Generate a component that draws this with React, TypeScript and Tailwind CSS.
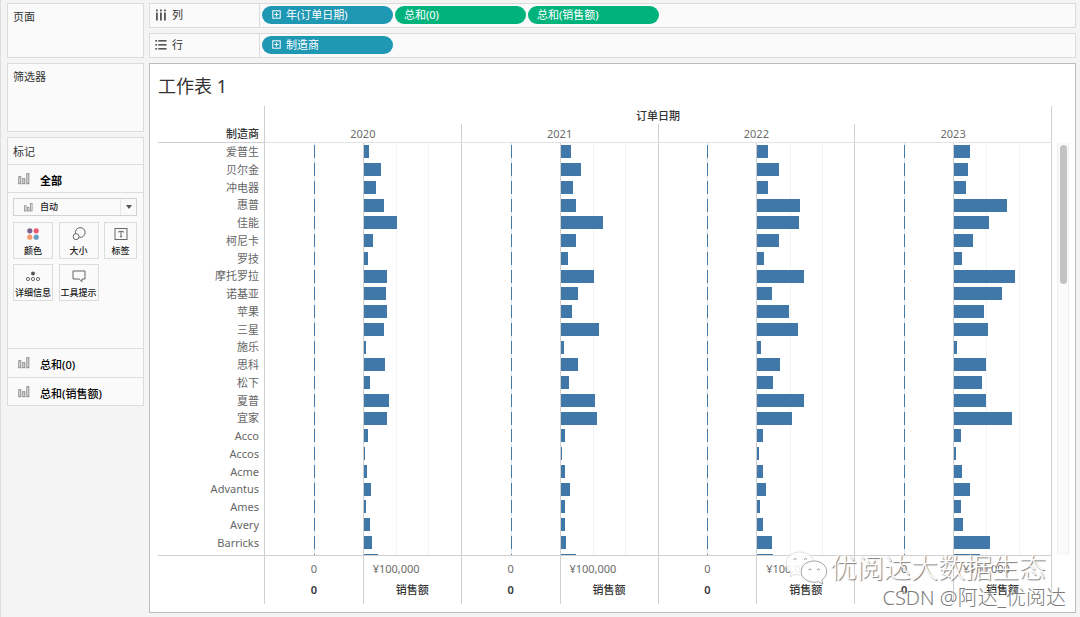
import type { ReactNode } from "react";
import clsx from "clsx";

const YEARS = ["2020", "2021", "2022", "2023"];

// upper end of the sales axis, in thousands of yuan
const AXIS_MAX = 295;

// sales per manufacturer in thousands of yuan, one value for each year
const ROWS: { name: string; sales: number[] }[] = [
  { name: "爱普生", sales: [15, 31, 33, 49] },
  { name: "贝尔金", sales: [52, 61, 65, 42] },
  { name: "冲电器", sales: [36, 37, 31, 36] },
  { name: "惠普", sales: [60, 47, 129, 161] },
  { name: "佳能", sales: [102, 130, 126, 105] },
  { name: "柯尼卡", sales: [28, 47, 65, 57] },
  { name: "罗技", sales: [13, 23, 20, 23] },
  { name: "摩托罗拉", sales: [69, 103, 143, 185] },
  { name: "诺基亚", sales: [66, 52, 44, 145] },
  { name: "苹果", sales: [70, 34, 95, 90] },
  { name: "三星", sales: [60, 116, 124, 102] },
  { name: "施乐", sales: [7, 10, 12, 10] },
  { name: "思科", sales: [63, 52, 68, 97] },
  { name: "松下", sales: [18, 26, 49, 84] },
  { name: "夏普", sales: [76, 106, 143, 97] },
  { name: "宜家", sales: [71, 110, 105, 175] },
  { name: "Acco", sales: [13, 13, 17, 20] },
  { name: "Accos", sales: [4, 4, 4, 6] },
  { name: "Acme", sales: [10, 13, 17, 23] },
  { name: "Advantus", sales: [23, 28, 25, 47] },
  { name: "Ames", sales: [7, 13, 9, 20] },
  { name: "Avery", sales: [19, 13, 17, 26] },
  { name: "Barricks", sales: [26, 17, 46, 108] },
  { name: "Bevis", sales: [44, 47, 49, 79] },
];

function BarsIcon({ className }: { className?: string }) {
  return (
    <svg viewBox="0 0 12 12" className={clsx("shrink-0", className)} fill="#ececec" stroke="#8a8a8a" strokeWidth="1">
      <rect x="0.8" y="3.7" width="2" height="7" />
      <rect x="4.8" y="5.7" width="2" height="5" />
      <rect x="8.8" y="0.7" width="2" height="10" />
    </svg>
  );
}

function ColumnsIcon() {
  return (
    <svg viewBox="0 0 12 12" className="h-3 w-3 shrink-0" fill="#555">
      {[1, 5, 9].map((x) => (
        <g key={x}>
          <rect x={x} y="0.5" width="1.8" height="1.8" />
          <rect x={x} y="3.5" width="1.8" height="8" />
        </g>
      ))}
    </svg>
  );
}

function RowsIcon() {
  return (
    <svg viewBox="0 0 12 12" className="h-3 w-3 shrink-0" fill="#555">
      {[1, 5, 9].map((y) => (
        <g key={y}>
          <rect x="0.3" y={y} width="1.8" height="1.6" />
          <rect x="3.3" y={y} width="8.2" height="1.6" />
        </g>
      ))}
    </svg>
  );
}

function ExpandIcon() {
  return (
    <svg viewBox="0 0 9 9" className="h-[9px] w-[9px] shrink-0" fill="none" stroke="#fff" strokeWidth="1">
      <rect x="0.8" y="0.8" width="7.4" height="7.4" />
      <path d="M4.5 2.4v4.2M2.4 4.5h4.2" />
    </svg>
  );
}

function ColorIcon() {
  return (
    <svg viewBox="0 0 16 16" className="h-4 w-4">
      <circle cx="4.8" cy="4.8" r="2.6" fill="#7b6091" />
      <circle cx="11.2" cy="4.8" r="2.6" fill="#ee5a6f" />
      <circle cx="4.8" cy="11.2" r="2.6" fill="#f79a6b" />
      <circle cx="11.2" cy="11.2" r="2.6" fill="#6a9dc4" />
    </svg>
  );
}

function SizeIcon() {
  return (
    <svg viewBox="0 0 16 16" className="h-4 w-4" fill="none" stroke="#666" strokeWidth="1">
      <path d="M4.4 7.3A4.9 4.9 0 1 1 8.2 11.3" />
      <circle cx="5.1" cy="10.6" r="3" />
    </svg>
  );
}

function LabelIcon() {
  return (
    <svg viewBox="0 0 16 16" className="h-4 w-4" fill="none" stroke="#666" strokeWidth="1">
      <rect x="2" y="2.5" width="12" height="11" />
      <path d="M5.8 6.6V5.4h4.4v1.2M8 5.4v5.4M6.9 10.8h2.2" />
    </svg>
  );
}

function DetailIcon() {
  return (
    <svg viewBox="0 0 16 16" className="h-4 w-4" fill="none" stroke="#666" strokeWidth="1">
      <circle cx="8" cy="5.4" r="2" fill="#555" stroke="none" />
      <circle cx="3" cy="11" r="1.6" />
      <circle cx="8" cy="11" r="1.6" />
      <circle cx="13" cy="11" r="1.6" />
    </svg>
  );
}

function TooltipIcon() {
  return (
    <svg viewBox="0 0 16 16" className="h-4 w-4" fill="none" stroke="#666" strokeWidth="1">
      <path d="M2 3h12v8h-3v2.8L8.2 11H2z" />
    </svg>
  );
}

function Card({ title, className }: { title: string; className?: string }) {
  return (
    <section className={clsx("border border-[#dcdcdc] bg-[#fafafa] px-[5px] py-[5px]", className)}>
      <h2 className="leading-4">{title}</h2>
    </section>
  );
}

function MarkButton({ icon, label }: { icon: ReactNode; label: string }) {
  return (
    <button
      type="button"
      className="flex h-[37px] flex-col items-center justify-between whitespace-nowrap border border-[#dcdcdc] bg-[#fafafa] pt-[3px] text-[9px] font-medium leading-[14px] text-[#222]"
    >
      {icon}
      {label}
    </button>
  );
}

function MarksRow({ label, className }: { label: string; className?: string }) {
  return (
    <button type="button" className={clsx("flex w-full items-center gap-[10px] pl-[10px] text-left text-black", className)}>
      <BarsIcon className="h-3 w-3" />
      <span className="pt-1 leading-4">{label}</span>
    </button>
  );
}

function Pill({ label, dimension = false }: { label: string; dimension?: boolean }) {
  return (
    <button
      type="button"
      className={clsx(
        "flex h-[18px] w-[131px] items-center gap-[5px] rounded-full text-left leading-4 text-white",
        dimension ? "bg-[#1f98b4] pl-[10px]" : "bg-[#00b37d] pl-[9px]"
      )}
    >
      {dimension && <ExpandIcon />}
      {label}
    </button>
  );
}

function Shelf({ icon, name, children }: { icon: ReactNode; name: string; children: ReactNode }) {
  return (
    <div className="flex h-[25px] shrink-0 border border-[#dcdcdc] bg-[#fafafa]">
      <div className="flex w-[110px] shrink-0 items-center gap-[5px] border-r border-[#dcdcdc] pb-0.5 pl-[5px]">
        {icon}
        <span className="leading-4">{name}</span>
      </div>
      <div className="flex items-center gap-0.5 pb-0.5 pl-0.5">{children}</div>
    </div>
  );
}

function YearPanel({ index }: { index: number }) {
  return (
    <div className="grid grid-cols-2 border-r border-[#cfcfcf]">
      <div className="relative grid grid-rows-[repeat(24,minmax(0,1fr))]">
        <div className="absolute inset-y-0 left-1/2 w-px bg-[#d9e4ec]" />
        {ROWS.map((row) => (
          <div key={row.name} className="relative flex items-center pl-[50%]">
            <div className="h-[13px] w-px bg-[#4479a8]" />
          </div>
        ))}
      </div>
      <div className="relative grid grid-rows-[repeat(24,minmax(0,1fr))] border-l border-[#cfcfcf]">
        <div className="absolute inset-y-0 left-1/3 w-px bg-[#f3f3f3]" />
        <div className="absolute inset-y-0 left-2/3 w-px bg-[#f3f3f3]" />
        {ROWS.map((row) => (
          <div key={row.name} className="relative flex items-center">
            <div className="h-[13px] bg-[#4079a9]" style={{ width: `${(row.sales[index] / AXIS_MAX) * 100}%` }} />
          </div>
        ))}
      </div>
    </div>
  );
}

function Sidebar() {
  return (
    <aside className="flex w-[137px] shrink-0 flex-col gap-[5px]">
      <Card title="页面" className="h-[55px]" />
      <Card title="筛选器" className="h-[69px]" />
      <section className="border border-[#dcdcdc] bg-[#fafafa]">
        <h2 className="flex h-[27px] items-center border-b border-[#dcdcdc] pl-[5px] pt-0.5">标记</h2>
        <MarksRow label="全部" className="h-7 border-b border-[#dcdcdc] font-bold" />
        <div className="flex h-[156px] flex-col gap-[6px] border-b border-[#dcdcdc] pl-[5px] pr-[6px] pt-[5px]">
          <div className="relative flex h-[18px] shrink-0 items-center border border-[#d2d2d2] bg-[#fafafa]">
            <BarsIcon className="absolute left-[10px] h-[9px] w-[9px]" />
            <select
              aria-label="标记类型"
              className="h-4 w-full appearance-none bg-transparent pl-[26px] text-[9px] font-medium leading-4 text-[#222] outline-none"
            >
              <option>自动</option>
            </select>
            <span className="pointer-events-none absolute inset-y-0 right-0 flex w-4 items-center justify-center border-l border-[#e6e6e6]">
              <svg viewBox="0 0 6 4" className="h-1 w-[6px]" fill="#555">
                <path d="M0 0h6L3 4z" />
              </svg>
            </span>
          </div>
          <div className="grid grid-cols-[40px_40px_33px] justify-between gap-y-[5px]">
            <MarkButton icon={<ColorIcon />} label="颜色" />
            <MarkButton icon={<SizeIcon />} label="大小" />
            <MarkButton icon={<LabelIcon />} label="标签" />
            <MarkButton icon={<DetailIcon />} label="详细信息" />
            <MarkButton icon={<TooltipIcon />} label="工具提示" />
          </div>
        </div>
        <MarksRow label="总和(0)" className="h-[29px] border-b border-[#dcdcdc] font-medium" />
        <MarksRow label="总和(销售额)" className="h-[27px] font-medium" />
      </section>
    </aside>
  );
}

function Worksheet() {
  return (
    <section className="flex min-h-0 flex-1 flex-col border border-[#bdbdbd] bg-white pb-2 pl-2 pr-[6px]">
      <h1 className="flex h-[42px] shrink-0 items-center pt-0.5 text-lg text-[#333]">工作表 1</h1>
      <div className="grid min-h-0 flex-1 grid-cols-[107px_1fr_17px] grid-rows-[37px_minmax(0,1fr)_49px]">
        <div className="border-b border-r border-[#cfcfcf] pr-[5px] pt-[18px] text-right font-medium leading-5 text-[#333]">
          <div className="h-[18px]">制造商</div>
        </div>
        <div className="border-b border-b-[#e2e2e2] text-center leading-5">
          <div className="h-[18px] border-r border-[#cfcfcf] font-medium text-[#333]">订单日期</div>
          <div className="grid grid-cols-4 text-[#6b6b6b]">
            {YEARS.map((year) => (
              <div key={year} className="h-[18px] border-r border-[#cfcfcf]">
                {year}
              </div>
            ))}
          </div>
        </div>
        <div />

        <div className="overflow-hidden border-r border-[#cfcfcf]">
          <div className="grid h-[426px] grid-rows-[repeat(24,minmax(0,1fr))] pr-[5px] text-right text-[#666]">
            {ROWS.map((row) => (
              <div key={row.name} className="leading-[18px]">
                {row.name}
              </div>
            ))}
          </div>
        </div>
        <div className="overflow-hidden">
          <div className="grid h-[426px] grid-cols-4">
            {YEARS.map((year, i) => (
              <YearPanel key={year} index={i} />
            ))}
          </div>
        </div>
        <div className="ml-[5px] border-x border-[#eeeeee] bg-[#fafafa] pt-0.5">
          <div className="mx-auto h-[139px] w-[7px] rounded-full bg-[#c2c2c2]" />
        </div>

        <div className="border-r border-t border-[#cfcfcf]" />
        <div className="grid grid-cols-4 border-t border-[#cfcfcf] text-center leading-[18px]">
          {YEARS.map((year) => (
            <div key={year} className="grid grid-cols-2 border-r border-[#cfcfcf]">
              <div className="flex flex-col gap-[3px] pt-1">
                <span className="text-[#6b6b6b]">0</span>
                <span className="font-semibold text-[#333]">0</span>
              </div>
              <div className="flex flex-col gap-[3px] border-l border-[#cfcfcf] pt-1">
                <span className="w-2/3 text-[#6b6b6b]">¥100,000</span>
                <span className="font-medium text-[#333]">销售额</span>
              </div>
            </div>
          ))}
        </div>
      </div>
    </section>
  );
}

function Watermark() {
  return (
    <div className="pointer-events-none absolute bottom-[7px] right-[14px] flex flex-col items-end whitespace-nowrap">
      <div className="mr-5 flex items-center gap-0.5 text-[27px] font-light leading-8 text-white [text-shadow:1px_1px_1px_#777]">
        <svg viewBox="0 0 44 36" className="h-9 w-11" fill="#fff" fillOpacity="0.88" stroke="#a5a5a5" strokeWidth="0.8">
          <path
            stroke="#d8d8d8"
            d="M16 2C8.200 2 2 7 2 13.500c0 3.600 2 6.800 5.200 8.900L6 27l5-2.600c1.600.4 3.300.6 5 .6 7.800 0 14-5 14-11.500S23.800 2 16 2z"
          />
          <path
            fillOpacity="1"
            stroke="#8c8c8c"
            d="M30 11c-7.200 0-12.800 4.700-12.800 10.600S22.800 32.200 30 32.200c1.500 0 3-.2 4.300-.6l4.700 2.600-1.200-4.200c3-2 4.900-5 4.900-8.400C42.700 15.700 37.200 11 30 11z"
          />
          <path fill="none" stroke="#777" d="M9.500 9.500q1.500-2 3 0M20 9.500q1.500-2 3 0M24.500 20q1.500-2 3 0M33 20q1.500-2 3 0" />
        </svg>
        优阅达大数据生态
      </div>
      <div className="text-[20px] font-light leading-6 text-[#7c7c7c] [text-shadow:1px_1px_0_#fff]">CSDN @阿达_优阅达</div>
    </div>
  );
}

export default function App() {
  return (
    <div
      lang="zh-CN"
      className="relative flex h-screen gap-[5px] overflow-hidden border-l border-[#dedede] bg-[#f4f4f4] pb-1 pl-[6px] pr-1 pt-[3px] font-['Noto_Sans','Noto_Sans_CJK_SC',sans-serif] text-[11px] text-[#333]"
    >
      <Sidebar />
      <main className="flex min-w-0 flex-1 flex-col gap-[5px]">
        <Shelf icon={<ColumnsIcon />} name="列">
          <Pill label="年(订单日期)" dimension />
          <Pill label="总和(0)" />
          <Pill label="总和(销售额)" />
        </Shelf>
        <Shelf icon={<RowsIcon />} name="行">
          <Pill label="制造商" dimension />
        </Shelf>
        <Worksheet />
      </main>
      <Watermark />
    </div>
  );
}
